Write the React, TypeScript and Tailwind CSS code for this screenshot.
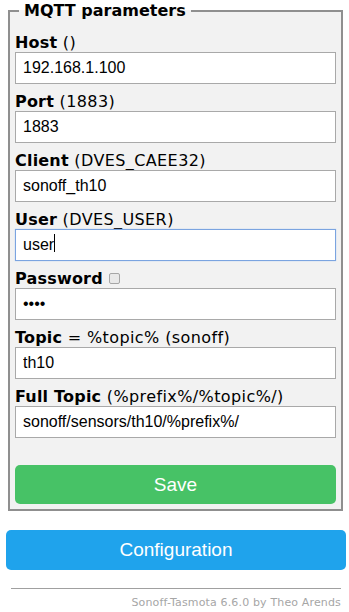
const labelFont = "font-['DejaVu_Sans',Verdana,sans-serif]"
const inputFont = "font-['Liberation_Sans',Arial,sans-serif]"

interface FieldProps {
  label: string
  hint?: string
  value: string
  type?: string
  focused?: boolean
  checkbox?: boolean
  first?: boolean
}

function Field({ label, hint, value, type = 'text', focused, checkbox, first }: FieldProps) {
  return (
    <div className={first ? 'mt-[13px]' : 'mt-[8px]'}>
      <div className={`${labelFont} h-[19px] text-[16px] leading-[19px] text-black flex items-center`}>
        <b className="tracking-[0.2px]">{label}</b>
        {hint && <span className="whitespace-pre tracking-[0.4px]">{' ' + hint}</span>}
        {checkbox && (
          <input
            type="checkbox"
            readOnly
            className="ml-[6px] w-[11px] h-[11px] appearance-none rounded-[2px] border border-[#a6a6a6] bg-[#e9e9e9]"
          />
        )}
      </div>
      <div className="relative">
        <input
          type={type}
          value={value}
          readOnly
          className={`${inputFont} block w-full h-[32px] px-[7px] text-[16px] text-black bg-white border outline-none ${
            focused ? 'border-[#7ba4e0] shadow-[0_0_1px_#9fc0ef]' : 'border-[#a9a9a9]'
          }`}
        />
        {focused && <span className="absolute left-[39px] top-[5px] w-[1px] h-[18px] bg-black" />}
      </div>
    </div>
  )
}

export default function App() {
  return (
    <div className="w-[349px] h-[612px] bg-white overflow-hidden pt-[1px] pl-[6px]">
      <div className="w-[340px]">
        <fieldset className="ml-[2px] mr-[3px] border-2 border-[#8f8f8f] bg-[#f2f2f2] px-[5px] pb-[5px]">
          <legend className={`${labelFont} ml-[4px] px-[5px] text-[16px] leading-[19px] font-bold text-black`}>
            MQTT parameters
          </legend>
          <Field first label="Host" hint="()" value="192.168.1.100" />
          <Field label="Port" hint="(1883)" value="1883" />
          <Field label="Client" hint="(DVES_CAEE32)" value="sonoff_th10" />
          <Field label="User" hint="(DVES_USER)" value="user" focused />
          <Field label="Password" value="1234" type="password" checkbox />
          <Field label="Topic" hint="= %topic% (sonoff)" value="th10" />
          <Field label="Full Topic" hint="(%prefix%/%topic%/)" value="sonoff/sensors/th10/%prefix%/" />
          <button
            className={`${inputFont} mt-[27px] block w-full h-[39px] rounded-[5px] bg-[#47c266] text-white text-[19px] leading-[39px]`}
          >
            Save
          </button>
        </fieldset>
        <button
          className={`${inputFont} mt-[19px] block w-full h-[40px] rounded-[5px] bg-[#1fa3ec] text-white text-[19px] leading-[40px]`}
        >
          Configuration
        </button>
        <div className="mx-[5px] mt-[18px] text-right">
          <hr className="border-t border-[#a0a0a0]" />
          <div className={`${labelFont} mt-[7px] text-[11px] leading-[13px] tracking-[0.15px] text-[#a6a6a6]`}>
            Sonoff-Tasmota 6.6.0 by Theo Arends
          </div>
        </div>
      </div>
    </div>
  )
}
